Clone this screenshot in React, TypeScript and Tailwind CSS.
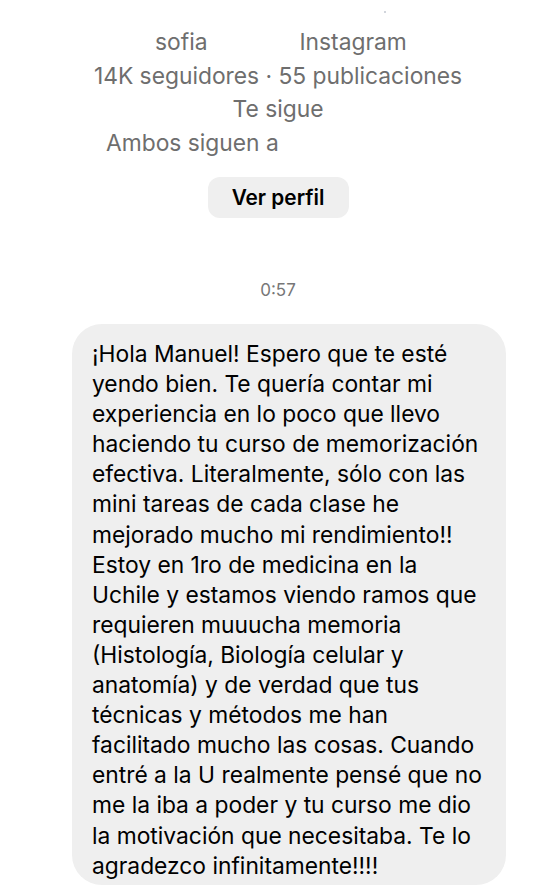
import React from "react";

const lines = [
  "¡Hola Manuel! Espero que te esté",
  "yendo bien. Te quería contar mi",
  "experiencia en lo poco que llevo",
  "haciendo tu curso de memorización",
  "efectiva. Literalmente, sólo con las",
  "mini tareas de cada clase he",
  "mejorado mucho mi rendimiento!!",
  "Estoy en 1ro de medicina en la",
  "Uchile y estamos viendo ramos que",
  "requieren muuucha memoria",
  "(Histología, Biología celular y",
  "anatomía) y de verdad que tus",
  "técnicas y métodos me han",
  "facilitado mucho las cosas. Cuando",
  "entré a la U realmente pensé que no",
  "me la iba a poder y tu curso me dio",
  "la motivación que necesitaba. Te lo",
  "agradezco infinitamente!!!!",
];

export default function App() {
  return (
    <div className="w-[556px] h-[887px] overflow-hidden bg-white font-['Inter',sans-serif]">
      <div className="relative h-[25px]">
        <span className="absolute left-[384px] top-[11px] w-[2px] h-[2px] bg-gray-300"></span>
      </div>
      <div className="flex flex-col text-[22.8px] leading-[33.5px] text-[#6e6e6e]">
        <div className="flex pl-[155px] gap-[92px]">
          <span>sofia</span>
          <span>Instagram</span>
        </div>
        <div className="text-center">14K seguidores · 55 publicaciones</div>
        <div className="text-center">Te sigue</div>
        <div className="pl-[106px]">Ambos siguen a</div>
      </div>
      <div className="flex justify-center mt-[18px]">
        <button className="w-[141px] h-[41px] rounded-[12px] bg-[#efefef] text-[20.8px] font-semibold text-black">
          Ver perfil
        </button>
      </div>
      <div className="text-center text-[17px] leading-[24px] text-[#777777] mt-[60px]">0:57</div>
      <div className="ml-[72px] mt-[22px] w-[434px] h-[561px] rounded-[30px] bg-[#efefef] pl-[20px] pt-[15px] text-[22.8px] leading-[30.1px] text-black">
        {lines.map((l, i) => (
          <div key={i} className="whitespace-nowrap">{l}</div>
        ))}
      </div>
    </div>
  );
}
